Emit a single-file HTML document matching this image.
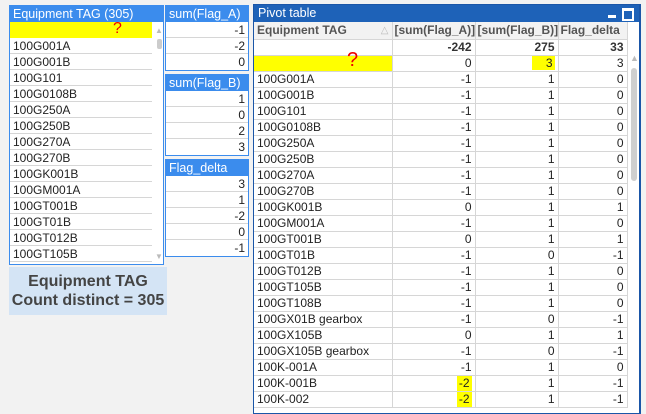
<!DOCTYPE html>
<html><head><style>
body{margin:0;width:646px;height:409px;background:#f2f2f2;position:relative;overflow:hidden;font-family:"Liberation Sans",sans-serif;font-size:12px;color:#222}
.p{position:absolute;background:#fff;border:1px solid #3b8ced;box-sizing:border-box;overflow:hidden}
.t{background:#3b8ced;color:#fff;height:16px;line-height:16px;padding-left:3px;font-size:12.5px}
.r{height:16px;line-height:16px;border-bottom:1px solid #d6d6d6;box-sizing:border-box;padding:0 3px;white-space:nowrap}
.n{text-align:right}
.y{background:#ffff00}
table{border-collapse:collapse;position:absolute;left:0;top:17px;table-layout:fixed;width:373px}
td{height:16px;padding:0 3px;border-bottom:1px solid #d6d6d6;border-right:1px solid #d6d6d6;box-sizing:border-box;line-height:15px;white-space:nowrap;overflow:hidden;text-align:right}
td:first-child{text-align:left}
</style></head><body>
<div class="p" style="left:9px;top:5px;width:155px;height:260px">
<div class="t">Equipment TAG (305)</div>
<div style="position:absolute;left:0;top:16px;width:142px">
<div class="r y" style="border:none;position:relative"><span style="position:absolute;left:103px;top:-1px;color:#e00;font-size:16px">?</span></div>
<div class="r">100G001A</div><div class="r">100G001B</div><div class="r">100G101</div><div class="r">100G0108B</div><div class="r">100G250A</div><div class="r">100G250B</div><div class="r">100G270A</div><div class="r">100G270B</div><div class="r">100GK001B</div><div class="r">100GM001A</div><div class="r">100GT001B</div><div class="r">100GT01B</div><div class="r">100GT012B</div><div class="r">100GT105B</div>
</div>
<div style="position:absolute;left:145px;top:20px;color:#bbb;font-size:8px">▲</div>
<div style="position:absolute;left:147px;top:33px;width:5px;height:10px;background:#ccc;border-radius:2px"></div>
<div style="position:absolute;left:145px;top:246px;color:#bbb;font-size:8px">▼</div>
</div>
<div class="p" style="left:165px;top:5px;width:84px;height:66px"><div class="t">sum(Flag_A)</div><div class="r n">-1</div><div class="r n">-2</div><div class="r n" style="border:none">0</div></div>
<div class="p" style="left:165px;top:74px;width:84px;height:82px"><div class="t">sum(Flag_B)</div><div class="r n">1</div><div class="r n">0</div><div class="r n">2</div><div class="r n" style="border:none">3</div></div>
<div class="p" style="left:165px;top:159px;width:84px;height:98px"><div class="t">Flag_delta</div><div class="r n">3</div><div class="r n">1</div><div class="r n">-2</div><div class="r n">0</div><div class="r n" style="border:none">-1</div></div>
<div style="position:absolute;left:9px;top:267px;width:158px;height:48px;background:#d4e4f5;color:#444;font-weight:bold;font-size:16px;text-align:center;line-height:19px;padding-top:5px;box-sizing:border-box">Equipment TAG<br>Count distinct = 305</div>
<div class="p" style="left:253px;top:4px;width:388px;height:410px;border:1px solid #1a56a8;border-right:2px solid #1a56a8">
<div style="background:#1e62b8;color:#fff;height:17px;line-height:17px;padding-left:4px;font-size:12.5px">Pivot table<span style="position:absolute;right:23px;top:10px;width:8px;height:3px;background:#fff"></span><span style="position:absolute;right:5px;top:3px;width:8px;height:8px;border:2px solid #fff;border-top-width:3px"></span></div>
<table>
<colgroup><col style="width:138px"><col style="width:83px"><col style="width:83px"><col style="width:69px"></colgroup>
<tr style="background:#f2f2f2;font-weight:bold;color:#555"><td style="height:17px;position:relative">Equipment TAG<span style="position:absolute;right:3px;color:#bbb;font-weight:normal;font-size:10px">△</span></td><td style="text-align:left;padding:0 2px">[sum(Flag_A)]</td><td style="text-align:left;padding:0 2px">[sum(Flag_B)]</td><td style="text-align:left;padding:0 2px">Flag_delta</td></tr>
<tr style="font-weight:bold;color:#333"><td style="height:15px"></td><td>-242</td><td>275</td><td>33</td></tr>
<tr><td class="y" style="position:relative;overflow:visible"><span style="position:absolute;left:93px;top:-3px;color:#e00;font-size:20px">?</span></td><td>0</td><td><span class="y" style="padding:0 2px 0 14px">3</span></td><td>3</td></tr>
<tr><td>100G001A</td><td>-1</td><td>1</td><td>0</td></tr>
<tr><td>100G001B</td><td>-1</td><td>1</td><td>0</td></tr>
<tr><td>100G101</td><td>-1</td><td>1</td><td>0</td></tr>
<tr><td>100G0108B</td><td>-1</td><td>1</td><td>0</td></tr>
<tr><td>100G250A</td><td>-1</td><td>1</td><td>0</td></tr>
<tr><td>100G250B</td><td>-1</td><td>1</td><td>0</td></tr>
<tr><td>100G270A</td><td>-1</td><td>1</td><td>0</td></tr>
<tr><td>100G270B</td><td>-1</td><td>1</td><td>0</td></tr>
<tr><td>100GK001B</td><td>0</td><td>1</td><td>1</td></tr>
<tr><td>100GM001A</td><td>-1</td><td>1</td><td>0</td></tr>
<tr><td>100GT001B</td><td>0</td><td>1</td><td>1</td></tr>
<tr><td>100GT01B</td><td>-1</td><td>0</td><td>-1</td></tr>
<tr><td>100GT012B</td><td>-1</td><td>1</td><td>0</td></tr>
<tr><td>100GT105B</td><td>-1</td><td>1</td><td>0</td></tr>
<tr><td>100GT108B</td><td>-1</td><td>1</td><td>0</td></tr>
<tr><td>100GX01B gearbox</td><td>-1</td><td>0</td><td>-1</td></tr>
<tr><td>100GX105B</td><td>0</td><td>1</td><td>1</td></tr>
<tr><td>100GX105B gearbox</td><td>-1</td><td>0</td><td>-1</td></tr>
<tr><td>100K-001A</td><td>-1</td><td>1</td><td>0</td></tr>
<tr><td>100K-001B</td><td><span class="y" style="padding:2px 2px">-2</span></td><td>1</td><td>-1</td></tr>
<tr><td>100K-002</td><td><span class="y" style="padding:2px 2px">-2</span></td><td>1</td><td>-1</td></tr>
</table>
<div style="position:absolute;left:376px;top:48px;color:#bbb;font-size:9px">▲</div>
<div style="position:absolute;left:377px;top:63px;width:6px;height:113px;background:#cfcfcf;border-radius:3px"></div>
</div>
</body></html>
